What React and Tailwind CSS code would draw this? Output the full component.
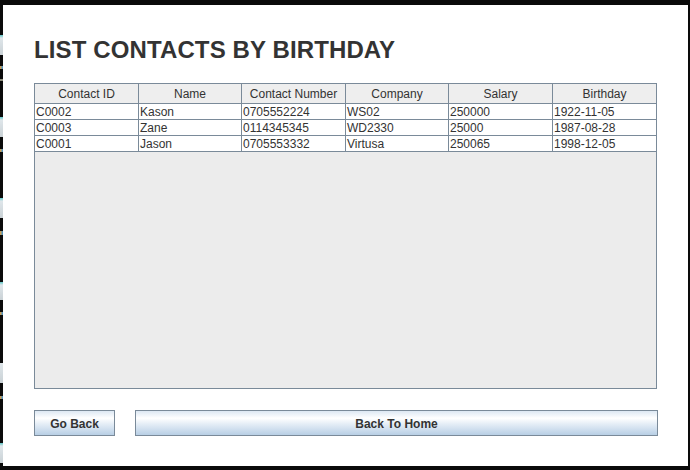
import React from "react";

const strip = [
  "h-[35px] bg-[#0a0a0a]",
  "h-[20px] bg-[linear-gradient(#5fc8c8_0px,#dfe6ea_3px,#c9d1d5_100%)]",
  "h-[11px] bg-[#0a0a0a]",
  "h-[3px] bg-[linear-gradient(90deg,#e0a040,#3a8fd0)]",
  "h-[10px] bg-[#0a0a0a]",
  "h-[2px] bg-[#8a8a7a]",
  "h-[36px] bg-[#0a0a0a]",
  "h-[20px] bg-[linear-gradient(#5fc8c8_0px,#dfe6ea_3px,#c9d1d5_100%)]",
  "h-[12px] bg-[#0a0a0a]",
  "h-[3px] bg-[linear-gradient(90deg,#e0a040,#3a8fd0)]",
  "h-[46px] bg-[#0a0a0a]",
  "h-[20px] bg-[linear-gradient(#5fc8c8_0px,#dfe6ea_3px,#c9d1d5_100%)]",
  "h-[13px] bg-[#0a0a0a]",
  "h-[4px] bg-[linear-gradient(90deg,#e0a040,#3a8fd0)]",
  "h-[47px] bg-[#0a0a0a]",
  "h-[18px] bg-[linear-gradient(#5fc8c8_0px,#dfe6ea_3px,#c9d1d5_100%)]",
  "h-[12px] bg-[#0a0a0a]",
  "h-[3px] bg-[linear-gradient(90deg,#e0a040,#3a8fd0)]",
  "h-[48px] bg-[#0a0a0a]",
  "h-[20px] bg-[linear-gradient(#dfe6ea,#c9d1d5)]",
  "h-[13px] bg-[#0a0a0a]",
  "h-[3px] bg-[linear-gradient(90deg,#e0a040,#3a8fd0)]",
  "h-[44px] bg-[#0a0a0a]",
  "h-[20px] bg-[linear-gradient(#5fc8c8_0px,#dfe6ea_3px,#c9d1d5_100%)]",
  "flex-1 bg-[#0a0a0a]",
];

const headers = ["Contact ID", "Name", "Contact Number", "Company", "Salary", "Birthday"];
const colW = ["w-[104px] border-r", "w-[103px] border-r", "w-[104px] border-r", "w-[103px] border-r", "w-[104px] border-r", "w-[103px]"];
const rows = [
  ["C0002", "Kason", "0705552224", "WS02", "250000", "1922-11-05"],
  ["C0003", "Zane", "0114345345", "WD2330", "25000", "1987-08-28"],
  ["C0001", "Jason", "0705553332", "Virtusa", "250065", "1998-12-05"],
];

const btn =
  "h-[26px] pt-[1px] border border-[#7a8a99] bg-[linear-gradient(to_bottom,#dde8f3_0%,#ffffff_30%,#e4edf6_55%,#b8cfe5_100%)] text-[12px] font-bold text-[#333333] flex items-center justify-center";

export default function App() {
  return (
    <div className="w-[690px] h-[470px] bg-[#0a0a0a] flex font-['Liberation_Sans',Arial,sans-serif]">
      <div className="w-[3px] h-full flex flex-col">
        {strip.map((c, i) => (
          <div key={i} className={c} />
        ))}
      </div>
      <div className="w-[685px] h-full flex flex-col">
        <div className="h-[5px] bg-[#0a0a0a]" />
        <div className="h-[461px] bg-white pl-[31px] flex flex-col">
          <h1 className="mt-[31px] h-[28px] leading-[28px] text-[24px] tracking-[0.12px] font-bold text-[#333333]">
            LIST CONTACTS BY BIRTHDAY
          </h1>
          <div className="mt-[19px] w-[623px] h-[306px] border border-[#7a8a99] bg-[#ececec] flex flex-col">
            <div className="flex h-[20px] bg-[#eeeeee] border-b border-[#7a8a99]">
              {headers.map((h, i) => (
                <div
                  key={h}
                  className={`${colW[i]} border-[#7a8a99] pt-[1px] text-center text-[12px] leading-[19px] text-[#333333] whitespace-nowrap`}
                >
                  {h}
                </div>
              ))}
            </div>
            {rows.map((r, ri) => (
              <div key={ri} className="flex h-[16px] bg-white border-b border-[#7a8a99]">
                {r.map((c, i) => (
                  <div
                    key={i}
                    className={`${colW[i]} border-[#7a8a99] pl-[1px] pt-[1px] text-[12px] leading-[15px] text-[#333333] whitespace-nowrap`}
                  >
                    {c}
                  </div>
                ))}
              </div>
            ))}
          </div>
          <div className="mt-[21px] flex gap-[20px]">
            <div className={`${btn} w-[81px]`}>Go Back</div>
            <div className={`${btn} w-[523px]`}>Back To Home</div>
          </div>
        </div>
        <div className="flex-1 bg-[#0a0a0a]" />
      </div>
      <div className="w-[2px] h-full bg-[#0a0a0a]" />
    </div>
  );
}
